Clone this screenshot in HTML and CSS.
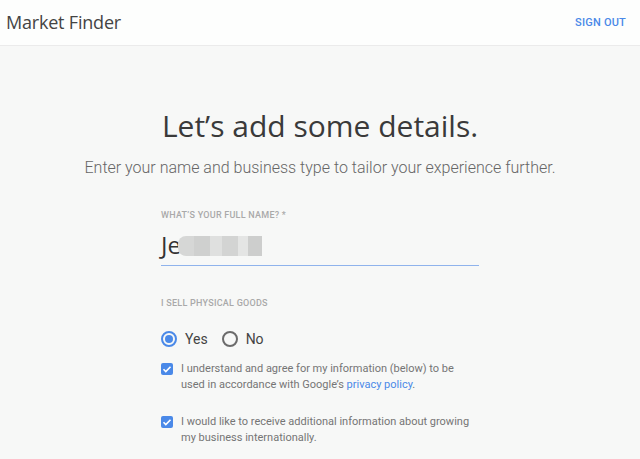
FILE: index.html
```html
<!DOCTYPE html>
<html lang="en">
<head>
    <meta charset="UTF-8">
    <meta name="viewport" content="width=device-width, initial-scale=1.0">
    <title>Market Finder - Details</title>
    <link rel="stylesheet" href="styles.css">
</head>
<body>
    <header class="topbar">
        <div class="brand">Market Finder</div>
        <a class="signout" href="#">SIGN OUT</a>
    </header>
    <main class="content">
        <h1>Let’s add some details.</h1>
        <p class="intro">Enter your name and business type to tailor your experience further.</p>
        <form class="details-form">
            <div class="form-group">
                <label class="field-label" for="fullName">WHAT’S YOUR FULL NAME? *</label>
                <div class="name-input">
                    <span class="typed">Je</span>
                    <span class="blur">
                        <i class="b1"></i><i class="b2"></i><i class="b3"></i><i class="b4"></i><i class="b5"></i><i class="b6"></i>
                    </span>
                </div>
            </div>
            <div class="form-group goods">
                <div class="field-label">I SELL PHYSICAL GOODS</div>
                <div class="radios">
                    <label class="radio"><span class="dot checked"></span>Yes</label>
                    <label class="radio"><span class="dot"></span>No</label>
                </div>
            </div>
            <label class="check">
                <span class="box">
                    <svg viewBox="0 0 12 12" width="12" height="12"><path d="M2.5 6.2l2.3 2.3 4.7-4.8" fill="none" stroke="#fff" stroke-width="1.6"/></svg>
                </span>
                <span class="check-text">I understand and agree for my information (below) to be used in accordance with Google’s <a href="#">privacy policy</a>.</span>
            </label>
            <label class="check">
                <span class="box">
                    <svg viewBox="0 0 12 12" width="12" height="12"><path d="M2.5 6.2l2.3 2.3 4.7-4.8" fill="none" stroke="#fff" stroke-width="1.6"/></svg>
                </span>
                <span class="check-text">I would like to receive additional information about growing my business internationally.</span>
            </label>
        </form>
    </main>
</body>
</html>
```
FILE: styles.css
```css
:root {
    --blue: #4a89e8;
    --text: #3c3c3c;
    --muted: #757575;
    --label: #a9a9a9;
    --bg: #f7f8f7;
}

* {
    margin: 0;
    padding: 0;
    box-sizing: border-box;
}

body {
    font-family: Roboto, 'Liberation Sans', sans-serif;
    background-color: var(--bg);
    color: var(--text);
    height: 459px;
    overflow: hidden;
}

.topbar {
    height: 46px;
    background-color: #fdfefd;
    border-bottom: 1px solid #ebebeb;
    display: flex;
    align-items: center;
    justify-content: space-between;
    padding: 0 14px 0 6px;
}

.brand {
    font-family: 'Open Sans', sans-serif;
    font-size: 18px;
    color: #444;
    letter-spacing: -0.2px;
    margin-top: -2px;
}

.signout {
    font-size: 11px;
    font-weight: 500;
    color: var(--blue);
    text-decoration: none;
    letter-spacing: 0.2px;
}

.content {
    display: flex;
    flex-direction: column;
    align-items: center;
    padding-top: 62px;
}

h1 {
    font-family: 'Open Sans', sans-serif;
    font-weight: 400;
    font-size: 30px;
    color: #3a3a3a;
    line-height: 36px;
}

.intro {
    margin-top: 14px;
    font-size: 16px;
    font-weight: 300;
    color: #666;
}

.details-form {
    width: 318px;
    margin-top: 33px;
}

.form-group {
    margin-bottom: 32px;
}

.form-group.goods {
    margin-bottom: 14px;
}

.field-label {
    display: block;
    font-size: 9px;
    font-weight: 500;
    color: var(--label);
    letter-spacing: 0.25px;
}

.name-input {
    display: flex;
    align-items: center;
    height: 42px;
    border-bottom: 1px solid #8fb3ec;
    margin-top: 4px;
}

.typed {
    font-family: 'Open Sans', sans-serif;
    font-size: 24px;
    color: #333;
}

.blur {
    display: flex;
    margin-left: -3px;
    margin-top: 2px;
}

.blur i {
    display: block;
    width: 16px;
    height: 20px;
}

.blur .b1 { background: #d6d7d6; border-radius: 8px 0 0 8px; }
.blur .b2 { background: #cfd0cf; }
.blur .b3 { background: #dfe0df; width: 12px; }
.blur .b4 { background: #d3d4d3; }
.blur .b5 { background: #e4e5e4; width: 10px; }
.blur .b6 { background: #cdcecd; width: 14px; }

.radios {
    display: flex;
    gap: 14px;
    margin-top: 23px;
}

.radio {
    display: flex;
    align-items: center;
    gap: 8px;
    font-size: 14px;
    color: #444;
}

.dot {
    width: 16px;
    height: 16px;
    border: 2px solid #6b6b6b;
    border-radius: 50%;
    position: relative;
}

.dot.checked {
    border-color: var(--blue);
}

.dot.checked::after {
    content: '';
    position: absolute;
    inset: 2px;
    border-radius: 50%;
    background: var(--blue);
}

.check {
    display: flex;
    gap: 8px;
    font-size: 11px;
    line-height: 16px;
    color: var(--muted);
    margin-bottom: 21px;
    padding-right: 4px;
}

.box {
    flex: none;
    width: 12px;
    height: 12px;
    margin-top: 2px;
    border-radius: 2px;
    background: var(--blue);
    display: flex;
}

.check a {
    color: var(--blue);
    text-decoration: none;
}
```
